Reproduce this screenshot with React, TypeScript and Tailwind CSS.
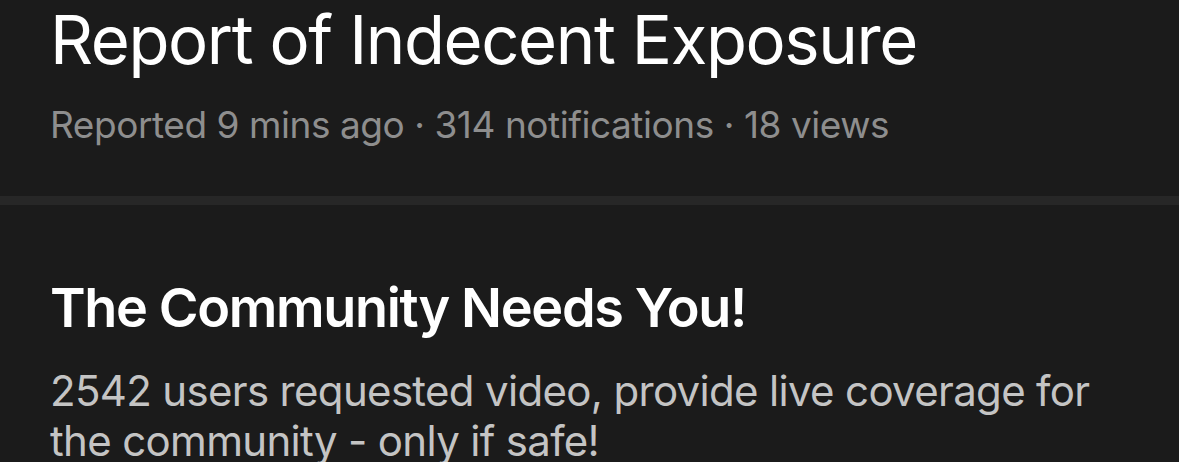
export default function App() {
  return (
    <div className="w-[1179px] h-[462px] overflow-hidden bg-[#1b1b1b] font-['Inter','Noto_Sans',sans-serif]">
      <div className="pl-[50px] pr-6">
        <h1 className="text-[67px] leading-[80px] font-normal text-white tracking-[-0.021em]">
          Report of Indecent Exposure
        </h1>
        <p className="mt-[23px] text-[37px] leading-[44px] text-[#8e8e8e] tracking-[-0.012em]">
          Reported 9 mins ago · 314 notifications · 18 views
        </p>
      </div>

      <div className="mt-[49px] h-[9px] bg-[#272727]" />

      <div className="pl-[50px] pr-6 pt-[71px]">
        <h2 className="text-[54px] leading-[64px] font-semibold text-white tracking-[-0.025em]">
          The Community Needs You!
        </h2>
        <p className="mt-[26px] text-[42px] leading-[50px] text-[#c4c4c4] tracking-[-0.016em]">
          2542 users requested video, provide live coverage for the community - only if safe!
        </p>
      </div>
    </div>
  );
}
